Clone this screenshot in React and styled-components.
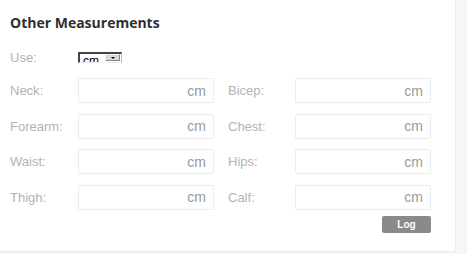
import { Fragment } from "react";
import styled, { createGlobalStyle } from "styled-components";

const GlobalStyle = createGlobalStyle`
  html, body {
    margin: 0;
    padding: 0;
    background: #f6f6f6;
  }
  body {
    font-family: "Liberation Sans", Arial, sans-serif;
  }
`;

const fields = [
  ["Neck", "Bicep"],
  ["Forearm", "Chest"],
  ["Waist", "Hips"],
  ["Thigh", "Calf"],
];

const Panel = styled.div`
  width: 456px;
  height: 252px;
  box-sizing: border-box;
  padding: 13px 24px 0 10px;
  background: #fff;
  border-right: 1px solid #ececec;
  border-bottom: 1px solid #ececec;
`;

const Title = styled.h3`
  margin: 0;
  height: 20px;
  line-height: 20px;
  font-family: "Open Sans", sans-serif;
  font-weight: 700;
  font-size: 14px;
  color: #2f2f2f;
`;

const UseRow = styled.div`
  display: flex;
  align-items: center;
  height: 11px;
  margin-top: 19px;
`;

const Label = styled.span`
  width: ${(p) => p.$width || 54}px;
  flex-shrink: 0;
  font-size: 13px;
  color: #b3b3b3;
  line-height: 25px;
`;

/* the reference shows a native select cut down to 11px, text clipped */
const FakeSelect = styled.div`
  position: relative;
  width: 44px;
  height: 11px;
  box-sizing: border-box;
  margin-left: 14px;
  border-top: 2px solid #444;
  border-left: 2px solid #444;
  border-right: 1px solid #bbb;
  border-bottom: 1px solid #eee;
  background: #fff;
  overflow: hidden;
`;

const SelectText = styled.span`
  position: absolute;
  left: 3px;
  top: 1px;
  font-size: 12px;
  line-height: 12px;
  color: #000;
`;

const SelectArrow = styled.span`
  position: absolute;
  right: 1px;
  top: 0;
  width: 15px;
  height: 7px;
  box-sizing: border-box;
  background: #d8d8d8;
  border: 1px solid #888;
  border-top-color: #f4f4f4;
  border-left-color: #f4f4f4;
  display: flex;
  align-items: center;
  justify-content: center;

  &::after {
    content: "";
    border-left: 2px solid transparent;
    border-right: 2px solid transparent;
    border-top: 2px solid #000;
  }
`;

const Grid = styled.div`
  display: grid;
  grid-template-columns: 54px 136px 53px 136px;
  column-gap: 14px;
  row-gap: 10.5px;
  margin-top: 15px;
`;

const InputBox = styled.div`
  height: 25px;
  box-sizing: border-box;
  border: 1px solid #ececec;
  border-radius: 2px;
  padding-right: 7px;
  display: flex;
  align-items: center;
  justify-content: flex-end;
  font-size: 14px;
  color: #9a9a9a;
`;

const ButtonRow = styled.div`
  display: flex;
  justify-content: flex-end;
  margin-top: 6px;
`;

const LogButton = styled.button`
  width: 49px;
  height: 17px;
  padding: 0;
  border: none;
  border-radius: 2px;
  background: #8a8a8a;
  color: #fff;
  font-family: "Liberation Sans", Arial, sans-serif;
  font-weight: 700;
  font-size: 10px;
  line-height: 17px;
  cursor: pointer;
`;

export default function App() {
  return (
    <>
      <GlobalStyle />
      <Panel>
        <Title>Other Measurements</Title>
        <UseRow>
          <Label>Use:</Label>
          <FakeSelect>
            <SelectText>cm</SelectText>
            <SelectArrow />
          </FakeSelect>
        </UseRow>
        <Grid>
          {fields.map(([left, right]) => (
            <Fragment key={left}>
              <Label>{left}:</Label>
              <InputBox>cm</InputBox>
              <Label $width={53}>{right}:</Label>
              <InputBox>cm</InputBox>
            </Fragment>
          ))}
        </Grid>
        <ButtonRow>
          <LogButton>Log</LogButton>
        </ButtonRow>
      </Panel>
    </>
  );
}
